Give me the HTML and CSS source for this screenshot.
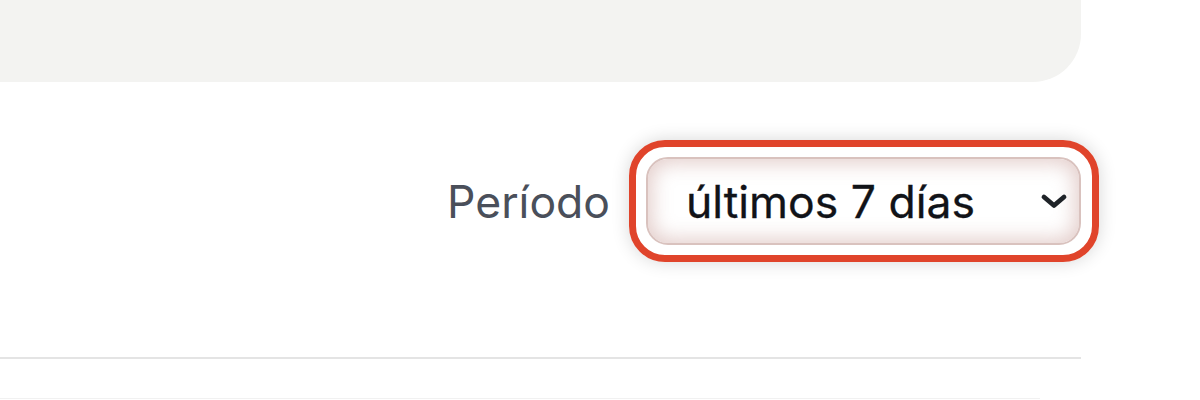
FILE: index.html
```html
<!DOCTYPE html>
<html lang="es">
<head>
<meta charset="utf-8">
<link rel="stylesheet" href="styles.css">
<title>Período</title>
</head>
<body>
<div class="page">
  <div class="top-panel"></div>
  <div class="filter-row">
    <span class="filter-label">Período</span>
    <div class="select-wrap">
      <div class="select">
        <span class="select-value">últimos 7 días</span>
        <svg class="chevron" width="28" height="16" viewBox="0 0 28 16" aria-hidden="true">
          <path d="M4 4 L14 12.5 L24 4" fill="none" stroke="#1f2328" stroke-width="4.8" stroke-linecap="round" stroke-linejoin="round"/>
        </svg>
      </div>
      <div class="highlight"></div>
    </div>
  </div>
  <div class="divider"></div>
  <div class="table-top"></div>
</div>
</body>
</html>
```

FILE: styles.css
```css
html, body {
  margin: 0;
  padding: 0;
  background: #ffffff;
}

body {
  font-family: Inter, "Noto Sans", "Liberation Sans", sans-serif;
  overflow: hidden;
}

.page {
  width: 1081px;
}

.top-panel {
  height: 82px;
  background: #f3f3f1;
  border-bottom-right-radius: 48px;
}

.filter-row {
  display: flex;
  justify-content: flex-end;
  align-items: center;
  gap: 36px;
  padding-top: 75px;
  padding-bottom: 112px;
}

.filter-label {
  font-size: 44.5px;
  color: #4a4f5a;
  line-height: 1;
  padding-top: 3px;
}

.select-wrap {
  position: relative;
}

.select {
  box-sizing: border-box;
  width: 435px;
  height: 88px;
  border: 2px solid #d9c2be;
  border-radius: 22px;
  background: #ffffff;
  box-shadow: inset 0 0 20px 4px rgba(188, 136, 128, 0.42);
  display: flex;
  align-items: center;
  justify-content: space-between;
  padding: 0 11px 0 38px;
}

.select-value {
  font-size: 44.5px;
  color: #111318;
  line-height: 1;
  padding-top: 3px;
  -webkit-text-stroke: 0.3px #111318;
}

.chevron {
  display: block;
}

.highlight {
  position: absolute;
  top: -17px;
  left: -17px;
  right: -18px;
  bottom: -17px;
  border: 7px solid #e0442b;
  border-radius: 36px;
  box-shadow: 0 0 18px rgba(0, 0, 0, 0.16);
  pointer-events: none;
}

.divider {
  height: 2px;
  background: #e4e4e4;
}

.table-top {
  margin-top: 39px;
  width: 1040px;
  height: 1px;
  background: #f1f1f1;
}
```
